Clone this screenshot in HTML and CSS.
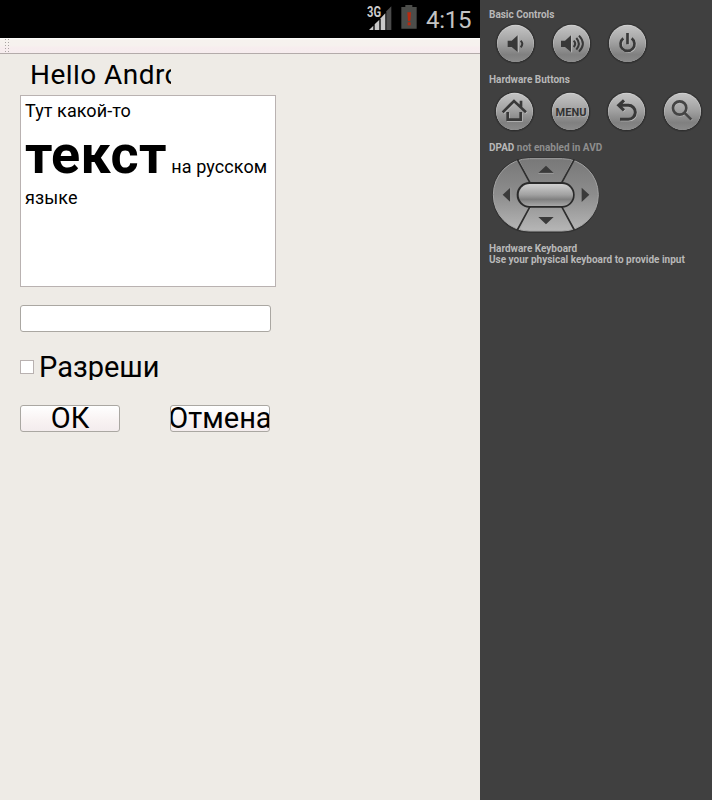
FILE: index.html
```html
<!DOCTYPE html>
<html lang="ru">
<head>
<meta charset="utf-8">
<title>Android Emulator</title>
<link rel="stylesheet" href="styles.css">
</head>
<body>
<svg class="defs" width="0" height="0">
  <defs>
    <linearGradient id="metal" x1="0" y1="0" x2="0" y2="1"><stop offset="0" stop-color="#c3c3c3"/><stop offset=".45" stop-color="#a2a2a2"/><stop offset=".8" stop-color="#808080"/><stop offset="1" stop-color="#8b8b8b"/></linearGradient>
    <linearGradient id="pad" x1="0" y1="0" x2="0" y2="1"><stop offset="0" stop-color="#787878"/><stop offset=".5" stop-color="#8d8d8d"/><stop offset="1" stop-color="#b6b6b6"/></linearGradient>
    <linearGradient id="center" x1="0" y1="0" x2="0" y2="1"><stop offset="0" stop-color="#d0d0d0"/><stop offset=".5" stop-color="#a0a0a0"/><stop offset=".7" stop-color="#808080"/><stop offset="1" stop-color="#a8a8a8"/></linearGradient>
    <g id="disc"><circle cx="61.500" cy="62" r="61" fill="#383838"/><circle cx="61.500" cy="62" r="58" fill="#2e2e2e"/><circle cx="61.500" cy="61" r="55.500" fill="#cfcfcf"/><circle cx="61.500" cy="62.500" r="54.500" fill="url(#metal)"/></g>
  </defs>
</svg>
<div class="emulator">
  <main class="screen">
    <div class="status">
      <svg class="signal" width="28" height="28" viewBox="0 0 84 84">
        <path d="M9 75 22 62V75Z" fill="#c8c8c8"/><path d="M26 58 40 44V75H26Z" fill="#c8c8c8"/><path d="M44 40 58 25V75H44Z" fill="#c8c8c8"/><path d="M61 19 76 4V75H61Z" fill="#4b4b4b"/>
        <path d="M0 0H44V36H0Z" fill="#000"/>
      </svg>
      <span class="net">3G</span>
      <svg class="battery" width="16" height="24" viewBox="0 0 48 72"><path d="M13 0H34V6H47V71H1V6H13Z" fill="#4c4d4a"/><path d="M19 22H30L28 48H21Z" fill="#b72a10"/><path d="M20 52H29V61H20Z" fill="#b72a10"/></svg>
      <span class="clock">4:15</span>
    </div>
    <div class="toolbar"><div class="grip"></div></div>
    <div class="form">
      <div class="hello">Hello Android</div>
      <div class="textbox"><p class="p1">Тут какой-то</p><p class="p2"><b>текст</b> на русском</p><p class="p3">языке</p></div>
      <div class="input"></div>
      <div class="check"><i></i><span>Разреши</span></div>
      <div class="actions"><div class="btn"><span>ОК</span></div><div class="btn"><span>Отмена</span></div></div>
    </div>
  </main>
  <aside class="controls">
    <h2>Basic Controls</h2>
    <div class="row basic">
      <svg width="41" height="41" viewBox="0 0 123 123"><use href="#disc"/><path d="M38 53H50L68 37V87L50 72H38Z" fill="#383838"/><path d="M70 37V88" stroke="#bdbdbd" stroke-width="3"/><path d="M77 53Q87 62 77 73" fill="none" stroke="#383838" stroke-width="6"/></svg>
      <svg width="41" height="41" viewBox="0 0 123 123"><use href="#disc"/><path d="M30 53H42L60 37V87L42 72H30Z" fill="#383838"/><path d="M62 37V88" stroke="#bdbdbd" stroke-width="3"/><g fill="none" stroke="#383838" stroke-width="6"><path d="M68 53Q77 62 68 72M76 45Q91 62 76 80M84 38Q107 62 84 86"/></g></svg>
      <svg width="41" height="41" viewBox="0 0 123 123"><use href="#disc"/><g fill="none" stroke="#bcbcbc" stroke-width="8" transform="translate(2 2)"><path d="M49 46A21 21 0 1 0 74 46M61.500 30V64"/></g><g fill="none" stroke="#383838" stroke-width="8"><path d="M49 46A21 21 0 1 0 74 46"/><path d="M61.500 30V64"/></g></svg>
    </div>
    <h2 class="hw">Hardware Buttons</h2>
    <div class="row hardware">
      <svg width="41" height="41" viewBox="0 0 123 123"><use href="#disc"/><g fill="none" stroke="#bcbcbc" stroke-width="8" transform="translate(2 2)"><path d="M26 64 60 30 96 64M41 63V86H80V63"/></g><g fill="none" stroke="#383838" stroke-width="8"><path d="M26 64 60 30 96 64M41 63V86H80V63M81 29V47"/></g></svg>
      <div class="menu"><svg width="41" height="41" viewBox="0 0 123 123"><use href="#disc"/></svg><span>MENU</span></div>
      <svg width="41" height="41" viewBox="0 0 123 123"><use href="#disc"/><g fill="none" stroke="#c0c0c0" stroke-width="8" transform="translate(2 2)"><path d="M54 28 38 43 54 58M40 43H67A21 21 0 0 1 67 85H42"/></g><g fill="none" stroke="#383838" stroke-width="9"><path d="M54 28 38 43 54 58M40 43H67A21 21 0 0 1 67 85H42"/></g></svg>
      <svg width="41" height="41" viewBox="0 0 123 123"><use href="#disc"/><g fill="none" stroke="#bcbcbc" stroke-width="7" transform="translate(2 2)"><circle cx="53" cy="51" r="20"/><path d="M67 65 87 85"/></g><g fill="none" stroke="#444" stroke-width="8"><circle cx="53" cy="51" r="20"/><path d="M67 65 88 86"/></g></svg>
    </div>
    <h2 class="dp">DPAD <span>not enabled in AVD</span></h2>
    <svg class="dpad" width="108" height="76" viewBox="36 57 324 228">
      <rect x="36" y="58" width="322" height="227" rx="113" fill="#333"/>
      <rect x="40" y="62" width="315" height="217" rx="108" fill="url(#pad)" stroke="#a5a5a5" stroke-width="3"/>
      <g stroke="#aaa" stroke-width="3"><path d="M116 66 152 136M279 66 243 136M118 276 154 206M281 276 245 206"/></g>
      <g stroke="#2e2e2e" stroke-width="5"><path d="M112 64 152 138M283 64 243 138M112 276 152 202M283 276 243 202"/></g>
      <rect x="110" y="132" width="174" height="77" rx="38" fill="#2a2a2a"/>
      <rect x="116" y="138" width="163" height="66" rx="33" fill="url(#center)"/>
      <g fill="#3a3a3a"><path d="M175 105 198 83 221 105ZM175 237 198 259 221 237ZM91 149V192L68 170ZM305 149V192L328 170Z"/></g>
      <path d="M175 106H221M92 149V192" stroke="#aaa" stroke-width="2"/>
    </svg>
    <h2 class="kb">Hardware Keyboard<br>Use your physical keyboard to provide input</h2>
  </aside>
</div>
</body>
</html>
```

FILE: styles.css
```css
* { box-sizing: border-box; }
body { margin: 0; font-family: Roboto, sans-serif; color: #000; }
.defs { display: block; }
.emulator { display: grid; grid-template-columns: 480px 232px; height: 800px; overflow: hidden; }
.screen { background: #eeebe6; }
.status { position: relative; height: 38px; background: #000; display: flex; align-items: flex-start; padding: 5px 0 0 366px; }
.signal { flex: none; }
.net { position: absolute; left: 367px; top: 6px; font-size: 14px; line-height: 13px; font-weight: 700; letter-spacing: 0; color: #ccc; transform: scaleX(.8); transform-origin: left; }
.battery { flex: none; margin-left: 7px; }
.clock { margin-left: 9px; font-size: 24px; line-height: 30px; letter-spacing: -.3px; color: #c4c4c4; }
.toolbar { height: 16px; border-bottom: 1px solid #b3abaa; background: linear-gradient(#fff, #f6f2ee 2px, #f6f1ee 8px, #f7edee 9px, #f6ecee); }
.grip { width: 5px; height: 16px; margin-left: 5px; background: radial-gradient(circle at .5px .5px, #aaa5a3 .6px, transparent .7px) 0 1px / 3px 3px; }
.form { padding: 11px 0 0 20px; }
.hello { width: 141px; height: 30px; margin-left: 10px; overflow: hidden; white-space: nowrap; font-size: 28px; line-height: 20px; letter-spacing: .45px; }
.textbox { width: 256px; height: 192px; border: 1px solid #b9b2b1; background: #fff; padding: 4px; font-size: 18px; letter-spacing: .08px; white-space: nowrap; }
.textbox p { margin: 0; }
.p1 { line-height: 21px; }
.p2 { line-height: 67px; }
.p2 b { font-size: 54px; letter-spacing: .25px; }
.p3 { line-height: 21px; }
.textbox .p3 { margin-top: -13px; }
.input { width: 251px; height: 27px; margin-top: 18px; border: 1px solid #aaa7a2; border-radius: 3px; background: #fff; }
.check { display: flex; align-items: center; height: 28px; margin-top: 21px; }
.check i { width: 14px; height: 14px; border: 1px solid #b9b2b1; background: #fff; }
.check span { height: 25px; margin-left: 5px; overflow: hidden; font-size: 29px; line-height: 25px; }
.actions { display: flex; gap: 50px; margin-top: 24px; }
.btn { width: 100px; height: 27px; border: 1px solid #aaa7a2; border-radius: 3px; background: linear-gradient(#fff, #f8f2f2 60%, #f3eced); overflow: hidden; display: flex; justify-content: center; font-size: 29px; line-height: 25px; }
.controls { background: #404040; padding: 9px 0 0 9px; }
h2 { margin: 0; font-size: 10px; line-height: 12px; font-weight: 700; color: #b8b8b8; }
.row { display: flex; gap: 15px; }
.row svg { display: block; flex: none; }
.basic { margin: 2px 0 0 6px; }
.hw { margin-top: 10px; }
.hardware { margin: 5px 0 0 5px; }
.menu { position: relative; width: 41px; height: 41px; flex: none; }
.menu span { position: absolute; left: 4px; top: 15px; width: 34px; text-align: center; font-size: 11px; line-height: 13px; font-weight: 700; color: #333; text-shadow: 1px 1px 0 #aaa; }
.dp { margin-top: 10px; }
.dp span { color: #8e8e8e; }
.dpad { display: block; margin: 3px 0 0 3px; }
.kb { margin-top: 10px; line-height: 11px; }
```
